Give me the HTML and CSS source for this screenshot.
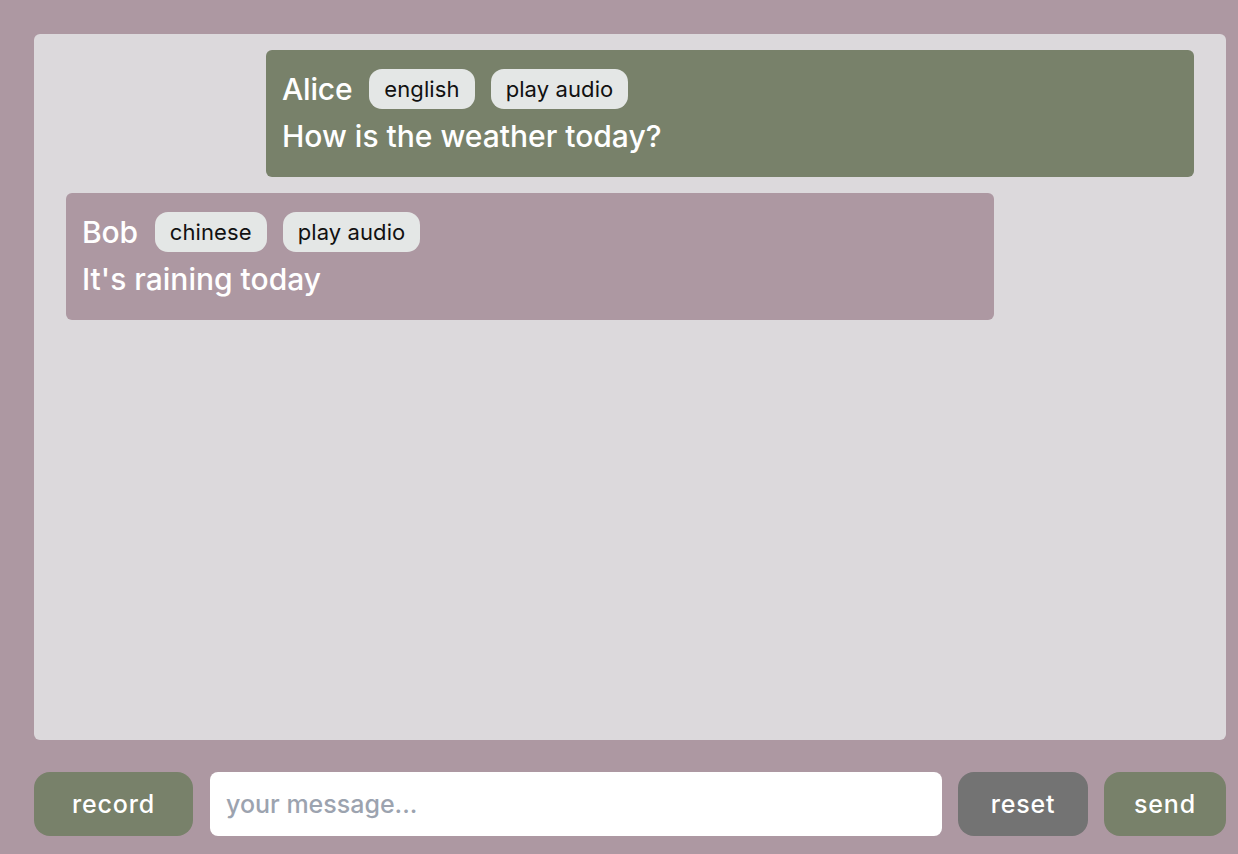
FILE: index.html
```html
<!DOCTYPE html>
<html lang="en">
<head>
<meta charset="utf-8">
<title>Chat</title>
<link rel="stylesheet" href="styles.css">
</head>
<body>
<div class="app">
  <main class="chat">
    <div class="msg msg-alice">
      <div class="msg-head">
        <span class="name">Alice</span>
        <span class="tag">english</span>
        <button class="tag">play audio</button>
      </div>
      <div class="msg-text">How is the weather today?</div>
    </div>
    <div class="msg msg-bob">
      <div class="msg-head">
        <span class="name">Bob</span>
        <span class="tag">chinese</span>
        <button class="tag">play audio</button>
      </div>
      <div class="msg-text">It's raining today</div>
    </div>
  </main>
  <footer class="bar">
    <button class="btn btn-green btn-record">record</button>
    <input class="input" type="text" placeholder="your message...">
    <button class="btn btn-gray btn-reset">reset</button>
    <button class="btn btn-green btn-send">send</button>
  </footer>
</div>
</body>
</html>
```
FILE: styles.css
```css
html, body {
  margin: 0;
  padding: 0;
  height: 100%;
}
body {
  background: #ad98a2;
  font-family: Inter, "Noto Sans", sans-serif;
  color: #fff;
}
.app {
  box-sizing: border-box;
  height: 854px;
  padding: 34px 12px 18px 34px;
  display: flex;
  flex-direction: column;
  gap: 32px;
}
.chat {
  flex: 1;
  background: #dcd9dc;
  border-radius: 6px;
  padding: 16px 32px;
  display: flex;
  flex-direction: column;
  gap: 16px;
}
.msg {
  width: 928px;
  box-sizing: border-box;
  border-radius: 6px;
  padding: 16px 16px 17px;
}
.msg-alice {
  align-self: flex-end;
  background: #78816a;
}
.msg-bob {
  align-self: flex-start;
  background: #ad98a2;
}
.msg-head {
  height: 46px;
  display: flex;
  align-items: center;
  gap: 16px;
}
.name {
  font-size: 30px;
  font-weight: 500;
  letter-spacing: -0.2px;
  margin-right: 1px;
}
.tag {
  font-family: inherit;
  border: 0;
  height: 40px;
  box-sizing: border-box;
  display: inline-flex;
  align-items: center;
  padding: 0 15px;
  border-radius: 13px;
  background: #e4e7e6;
  color: #111;
  font-size: 22px;
  font-weight: 400;
  letter-spacing: 0.1px;
}
.msg-text {
  font-size: 30px;
  line-height: 48px;
  font-weight: 450;
}
.bar {
  height: 64px;
  display: flex;
  gap: 16px;
}
.btn {
  font-family: inherit;
  border: 0;
  border-radius: 16px;
  color: #fff;
  font-size: 25px;
  font-weight: 500;
  letter-spacing: 0.8px;
  height: 64px;
  padding: 0;
}
.btn-green { background: #78816a; }
.btn-gray { background: #737373; }
.btn-record { width: 159px; margin-right: 1px; }
.btn-reset { width: 130px; }
.btn-send { width: 122px; }
.input {
  flex: 1;
  height: 64px;
  box-sizing: border-box;
  border: 0;
  border-radius: 8px;
  background: #fff;
  padding: 0 16px;
  font-family: inherit;
  font-size: 25px;
  font-weight: 450;
  color: #111;
  outline: none;
}
.input::placeholder {
  color: #9ca3af;
}
```
